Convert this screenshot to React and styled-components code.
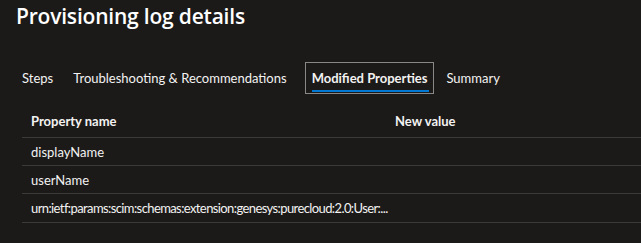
import styled, { createGlobalStyle } from 'styled-components';

const GlobalStyle = createGlobalStyle`
  html, body {
    margin: 0;
    padding: 0;
    background: #1b1a19;
  }
  body {
    font-family: Lato, 'Open Sans', sans-serif;
    color: #f3f2f1;
    overflow: hidden;
  }
`;

const Page = styled.div`
  width: 641px;
  height: 243px;
  background: #1b1a19;
  overflow: hidden;
`;

const Title = styled.h1`
  margin: 0;
  padding: 2px 0 0 16px;
  height: 60px;
  box-sizing: border-box;
  font-family: 'Open Sans', sans-serif;
  font-size: 21px;
  font-weight: 600;
  letter-spacing: -0.2px;
  color: #ffffff;
  line-height: 28px;
`;

const TabList = styled.div`
  display: flex;
  align-items: stretch;
  height: 32px;
  padding-left: 14px;
  margin-top: 2px;
`;

const Tab = styled.div`
  position: relative;
  display: flex;
  align-items: center;
  padding: 0 ${(p) => (p.active ? 6 : 7)}px;
  margin-right: ${(p) => p.gap}px;
  border: 1px solid ${(p) => (p.active ? '#8a8886' : 'transparent')};
  font-size: 13px;
  font-weight: ${(p) => (p.active ? 700 : 400)};
  color: #f3f2f1;
  white-space: nowrap;

  &::after {
    content: '';
    display: ${(p) => (p.active ? 'block' : 'none')};
    position: absolute;
    left: 6px;
    right: 4px;
    bottom: 1px;
    height: 2px;
    background: #0078d4;
  }
`;

const Table = styled.div`
  margin: 10px 0 0 22px;
`;

const Row = styled.div`
  display: grid;
  grid-template-columns: 364px 1fr;
  height: ${(p) => p.h}px;
  align-items: center;
  padding-left: 9px;
  border-bottom: 1px solid #3b3a39;
  font-size: 13px;
  font-weight: ${(p) => (p.header ? 700 : 400)};
  letter-spacing: ${(p) => (p.tight ? '-0.6px' : '0')};
  color: #f3f2f1;
`;

const Cell = styled.div`
  white-space: nowrap;
`;

const tabs = [
  { label: 'Steps', gap: 4 },
  { label: 'Troubleshooting & Recommendations', gap: 10 },
  { label: 'Modified Properties', gap: 4, active: true },
  { label: 'Summary', gap: 0 },
];

const rows = [
  'displayName',
  'userName',
  'urn:ietf:params:scim:schemas:extension:genesys:purecloud:2.0:User:...',
];

export default function App() {
  return (
    <Page>
      <GlobalStyle />
      <Title>Provisioning log details</Title>
      <TabList>
        {tabs.map((t) => (
          <Tab key={t.label} active={t.active} gap={t.gap}>
            {t.label}
          </Tab>
        ))}
      </TabList>
      <Table>
        <Row header h={33}>
          <Cell>Property name</Cell>
          <Cell>New value</Cell>
        </Row>
        {rows.map((r, i) => (
          <Row key={r} h={i === 2 ? 28 : 27} tight={i === 2}>
            <Cell>{r}</Cell>
            <Cell />
          </Row>
        ))}
      </Table>
    </Page>
  );
}
